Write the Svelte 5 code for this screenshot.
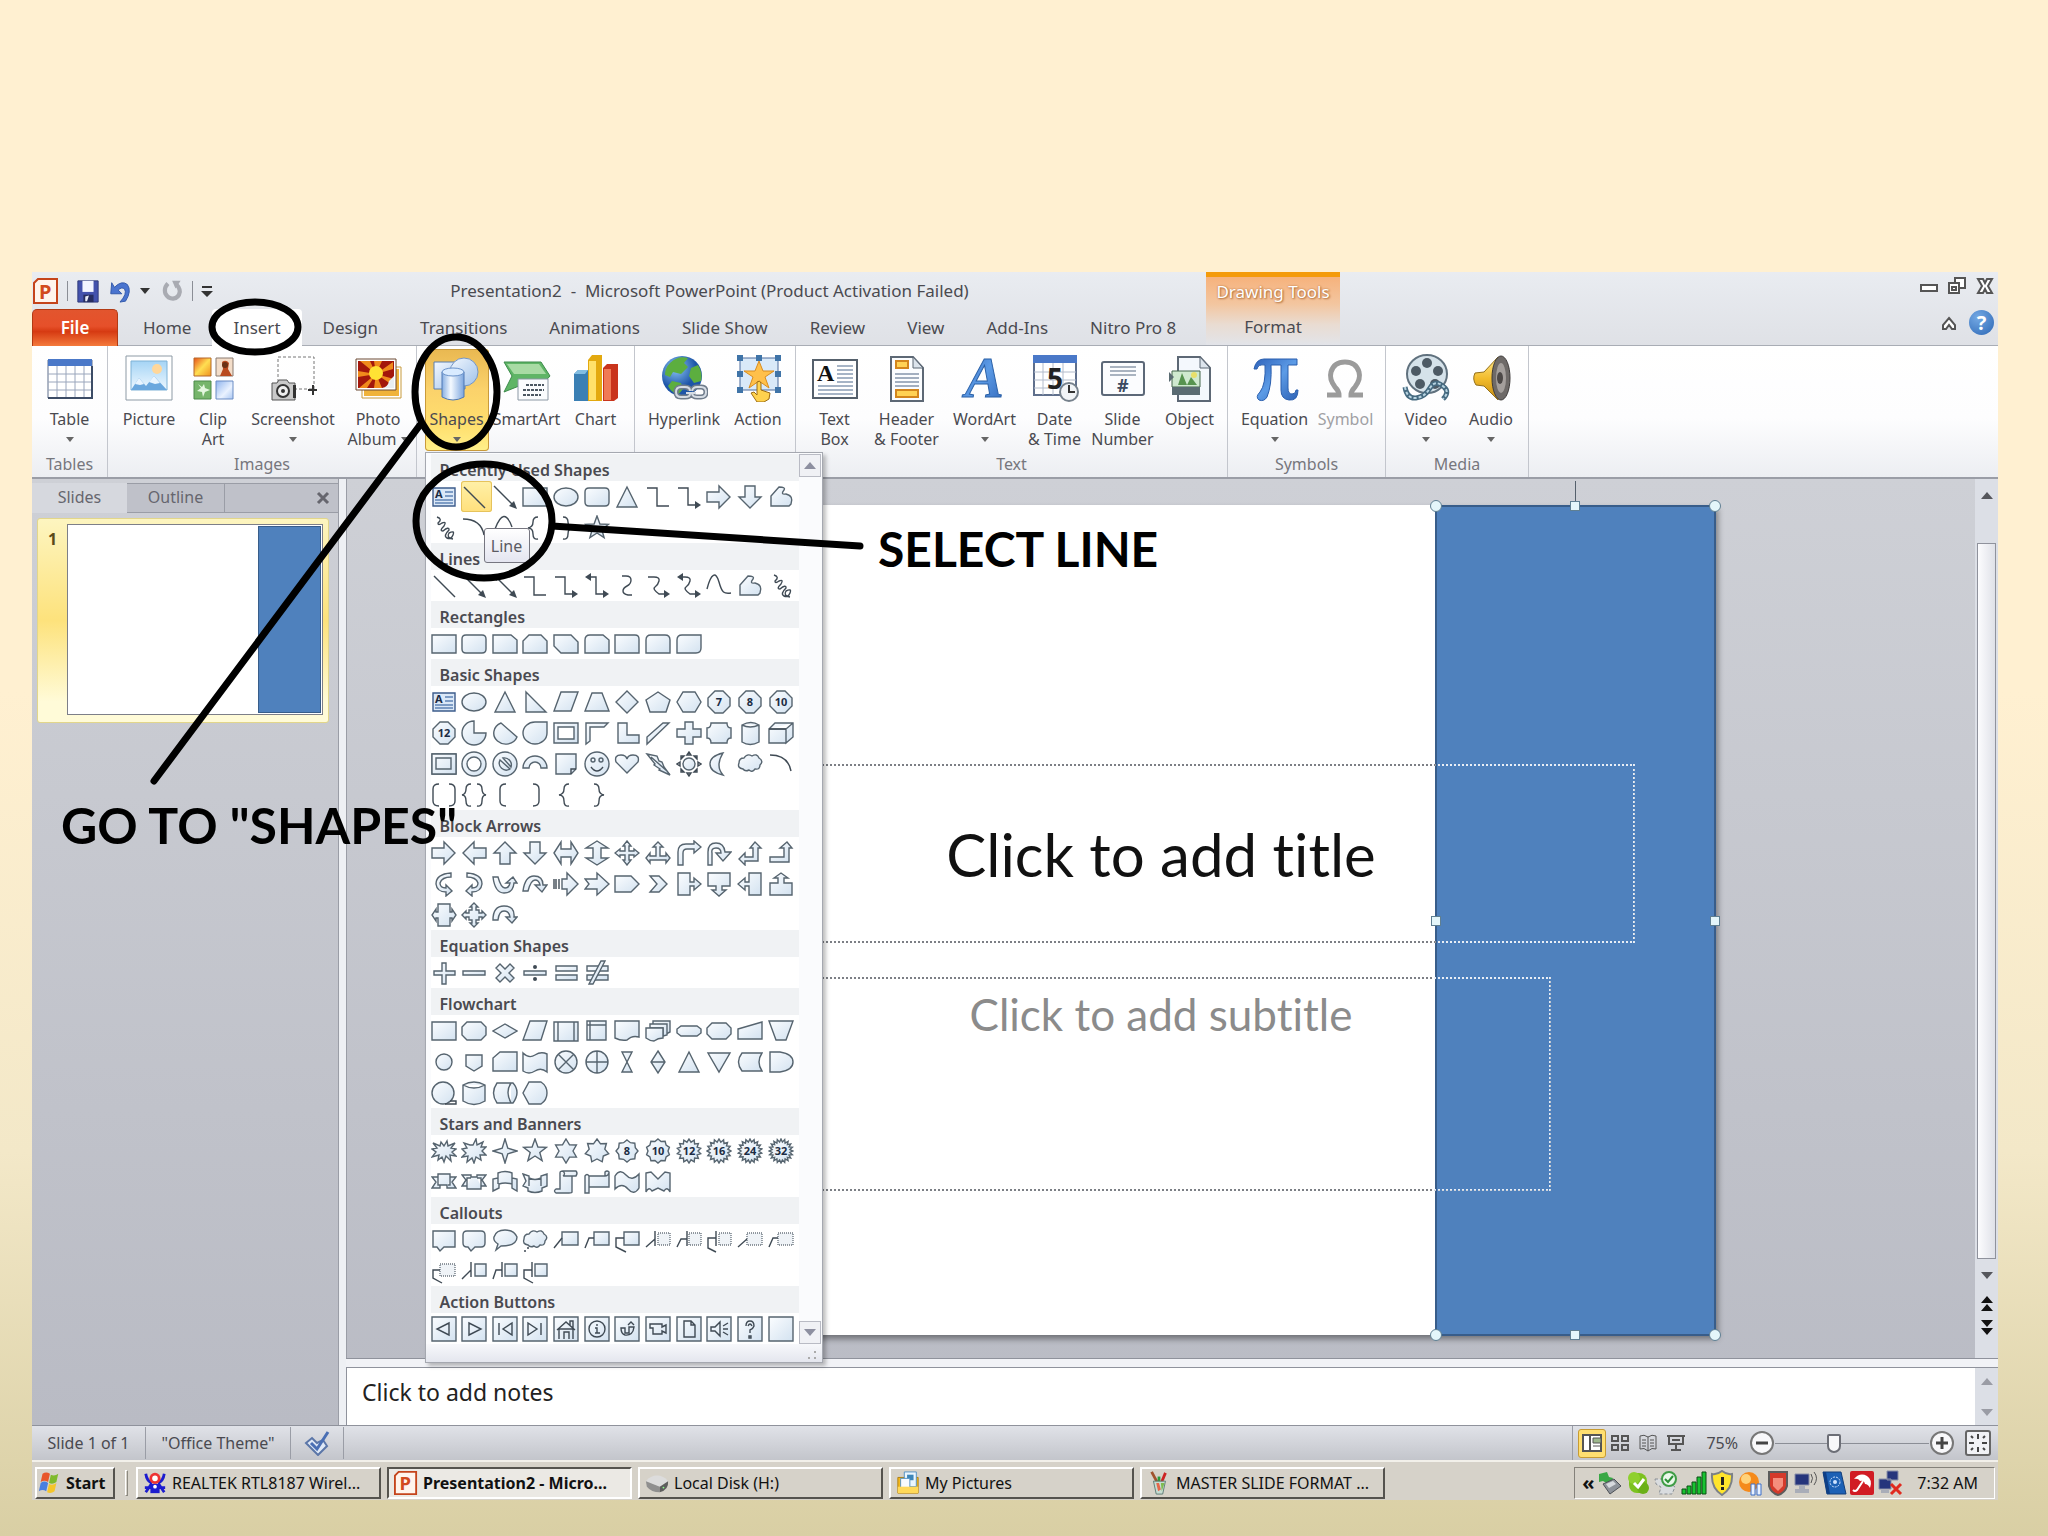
<script lang="ts">
	type Part = { kind: string; value: string };

	// --- shape path helpers, all inside a 26 x 26 box ---
	const ell = (cx: number, cy: number, rx: number, ry = rx) =>
		`M${cx - rx} ${cy}a${rx} ${ry} 0 1 0 ${rx * 2} 0a${rx} ${ry} 0 1 0 ${-rx * 2} 0z`;

	function star(n: number, outer: number, inner: number, turn = 0) {
		const pts: string[] = [];
		for (let i = 0; i < n * 2; i++) {
			const r = i % 2 ? inner : outer;
			const a = (Math.PI * i) / n - Math.PI / 2 + turn;
			pts.push(`${(13 + r * Math.cos(a)).toFixed(1)} ${(13 + r * Math.sin(a)).toFixed(1)}`);
		}
		return `M${pts.join('L')}z`;
	}

	const parse = (icon: string): Part[] =>
		icon.split('|').map((p) => ({ kind: p[0], value: p.slice(2) }));

	// s: filled outline, l: line, k: solid, m: shaded, d: dotted outline, t: number, a: letter A
	const RECT = 's:M1 4h24v18H1z';
	const RRECT = 's:M5 4h16q4 0 4 4v10q0 4-4 4H5q-4 0-4-4V8q0-4 4-4z';
	const OVAL = `s:${ell(13, 13, 12, 9)}`;
	const TEXTBOX = 'b:M2 4h22v18H2z|c:M14 8h8M14 12h8M4 16h18M4 19h18|a:A';
	const TRI = 's:M13 3l10 20H3z';
	const LINE = 'l:M3 3L24 24';
	const ARROW = 'l:M2 2L21 21|k:M25 25l-8-3 5-5z';
	const ARROW2 = 'l:M6 6L21 21|k:M25 25l-8-3 5-5z|k:M2 2l7 2-5 4z';
	const ELBOW = 'l:M2 4h10v18h12';
	const ELBOW_ARROW = 'l:M2 4h10v17h8|k:M19 17l6 4-6 4z';
	const RIGHT = 's:M1 8h12V2l11 11-11 11v-6H1z';
	const DOWN = 's:M8 2v11H2l11 11 11-11h-6V2z';
	const FREE = 's:M3 22V12l8-9q7 0 5 3-4 5 2 4 8 2 5 10l-2 2z';
	const SCRIBBLE = 'l:M6 2q6 2 1 6 0 3 4 0 5-2 2 3-5 5-1 5 6-5 6-1-6 6-2 8t6-3-4-2q-3 5 4 6';
	const ARC = 'l:M2 4Q20 4 23 20';
	const LBRACE = 'l:M16 2q-5 0-5 5t-5 6q5 0 5 6t5 5';
	const RBRACE = 'l:M10 2q5 0 5 5t5 6q-5 0-5 6t-5 5';
	const STAR5 = `s:${star(5, 12, 5)}`;
	const CAN = 's:M2 5v16q11 7 22 0V5Q13-1 2 5zq11 6 22 0';
	const CLOUD = 'M6 18q-6-1-4-6 0-5 5-5 3-5 8-2 5-3 7 2 5 3 1 7 0 5-5 4-3 4-6 1-4 2-6-1z';
	const num = (n: number) => `s:M9 2h8l7 7v8l-7 7H9l-7-7V9z|t:${n}`;
	const box = (inner: string) => `s:M1 1h24v24H1z|${inner}`;

	const sections = [
		{
			name: 'Recently Used Shapes',
			icons: [
				TEXTBOX, LINE, ARROW, RECT, OVAL, RRECT, TRI, ELBOW, ELBOW_ARROW, RIGHT, DOWN, FREE,
				SCRIBBLE, ARC, 'l:M3 14Q12-10 20 12', LBRACE, RBRACE, STAR5
			]
		},
		{
			name: 'Lines',
			icons: [
				LINE, ARROW, ARROW2, ELBOW, ELBOW_ARROW,
				'l:M6 4h6v17h8|k:M19 17l6 4-6 4z|k:M7 0L1 4l6 4z',
				'l:M8 3h4q5 0 5 4t-4 6-4 5 5 4h4',
				'l:M3 4h6q6 0 5 4t-4 6 4 7h6|k:M19 17l6 4-6 4z',
				'l:M6 4h3q6 0 5 4t-4 6 4 7h6|k:M19 17l6 4-6 4z|k:M7 0L1 4l6 4z',
				'l:M1 16C5 0 10-2 13 9s5 12 12 11', FREE, SCRIBBLE
			]
		},
		{
			name: 'Rectangles',
			icons: [
				RECT, RRECT,
				's:M1 4h18l6 5v13H1z',
				's:M7 4h12l6 6v12H1V10z',
				's:M1 4h17l7 7v11H8l-7-7z',
				's:M1 22V9q0-5 5-5h13l6 5v13z',
				's:M1 4h20q4 0 4 4v14H1z',
				's:M1 22V9q0-5 5-5h14q5 0 5 5v13z',
				's:M1 22V9q0-5 5-5h19v13q0 5-5 5z'
			]
		},
		{
			name: 'Basic Shapes',
			icons: [
				TEXTBOX, OVAL, TRI, 's:M4 3l20 20H4z', 's:M8 3h17l-7 19H1z', 's:M8 4h10l7 18H1z',
				's:M13 2l11 11-11 11L2 13z', 's:M13 3l12 8-4 12H5L1 11z', 's:M7 3h12l6 10-6 10H7L1 13z',
				num(7), num(8), num(10),
				num(12),
				's:M13 1v12h12a12 12 0 1 1-12-12z',
				's:M9 3l16 14A12 11 0 1 1 9 3z',
				's:M13 2h12v11a12 11 0 1 1-12-11z',
				's:M1 3h24v20H1zM5 7h16v12H5z',
				's:M2 3h22l-4 4H6v14l-4 3z',
				's:M4 3h9v12h12v8H4z',
				's:M18 3h6L2 24v-7z',
				's:M9 2h8v7h8v8h-8v7H9v-7H1V9h8z',
				's:M5 3h16q0 5 4 5v10q-4 0-4 5H5q0-5-4-5V8q4 0 4-5z',
				's:M5 5v17q8 5 17 0V5q-8-5-17 0zq8 4 17 0',
				's:M1 9h17v14H1zl6-6h18v14l-7 6V9l7-6|l:M1 9h17',
				's:M1 3h24v20H1z|m:M25 3v20H1l4-5h15V7z|s:M1 3h24v20H1zM5 7h15v11H5z',
				`s:${ell(13, 13, 12)}${ell(13, 13, 7)}`,
				`s:${ell(13, 13, 12)}|s:M8 9l10 9a7 7 0 0 1-10-9zM11 7l8 9a7 7 0 0 0-8-9z`,
				's:M1 17a12 12 0 0 1 24 0h-6a6 6 0 0 0-12 0z',
				's:M3 3h20v15l-5 5H3z|l:M18 23v-5h5',
				`s:${ell(13, 13, 12)}|l:M7 16q6 8 12 0|s:${ell(9, 9, 2)}${ell(17, 9, 2)}`,
				's:M13 22L2 11Q0 4 7 4q5 0 6 4 1-4 6-4 7 0 5 7z',
				's:M2 3l10 2 2 5 3 1 2 5 6 8-11-5 1-1-6-4 1-1zM6 6l16 14',
				`s:${ell(13, 13, 6)}|l:M11 4l2-3 2 3zM11 22l2 3 2-3zM4 11l-3 2 3 2zM22 11l3 2-3 2zM5 8V5h3zM18 5h3v3zM5 18v3h3zM18 21h3v-3z`,
				's:M17 2Q4 5 4 13t13 11q-8-9 0-22z',
				`s:${CLOUD}`, ARC,
				'l:M8 2q-6 0-6 5v12q0 5 6 5M18 2q6 0 6 5v12q0 5-6 5',
				'l:M10 2q-5 0-5 5t-4 6q4 0 4 6t5 5M16 2q5 0 5 5t4 6q-4 0-4 6t-5 5',
				'l:M14 2q-6 0-6 5v12q0 5 6 5',
				'l:M11 2q6 0 6 5v12q0 5-6 5',
				LBRACE, RBRACE
			]
		},
		{
			name: 'Block Arrows',
			icons: [
				RIGHT, 's:M25 8H13V2L2 13l11 11v-6h12z', 's:M8 24V13H2L13 2l11 11h-6v11z', DOWN,
				's:M1 13l7-11v7h10V2l7 11-7 11v-7H8v7z',
				's:M13 1L2 8h7v10H2l11 7 11-7h-7V8h7z',
				's:M13 1l4 5h-2v5h5V9l5 4-5 4v-2h-5v5h2l-4 5-4-5h2v-5H6v2l-5-4 5-4v2h5V6H9z',
				's:M13 2l5 5h-3v9h6v-3l4 5-4 5v-3H5v3l-4-5 4-5v3h6V7H8z',
				's:M2 25V12q0-8 8-8h8V1l7 6-7 6V9h-7q-4 0-4 4v12z',
				's:M2 25V12Q2 3 10 3t9 9h6l-8 9-7-8h5q0-5-5-5t-4 5v12z',
				's:M2 19l6-6v4h8V8h-3l5-6 6 6h-3v13H8v4z',
				's:M2 22v-5h14V8h-4l7-6 5 6h-3v14z',
				's:M20 2Q5 3 5 13q1 8 10 8v4l6-5-6-6v3Q9 17 9 12q2-6 11-6z',
				's:M6 2q15 1 15 11-1 8-10 8v4l-6-5 6-6v3q6 0 6-5Q15 6 6 6z',
				's:M1 6q2 16 11 16t10-10h3l-4-6-7 6h4q-1 5-5 5T6 6z',
				's:M1 20Q3 5 12 5t9 9h4l-5 7-7-7h5q-1-5-5-5t-7 11z',
				's:M9 8h5V2l11 11-11 11v-6H9z|l:M1 8v10M3 8v10M6 8v10',
				's:M1 8h12V2l12 11-12 11v-6H1l4-5z',
				's:M1 5h16l8 8-8 8H1z',
				's:M5 5h9l8 8-8 8H5l7-8z',
				's:M2 2h12v9h4V7l7 6-7 6v-4h-4v9H2z',
				's:M2 2h22v13h-8v4h4l-7 6-7-6h4v-4H2z',
				's:M24 2H12v9H8V7l-7 6 7 6v-4h4v9h12z',
				's:M2 24h22V12h-8V7h4l-7-5-7 5h4v5H2z',
				's:M7 2h12v8h2V7l4 6-4 6v-3h-2v8H7v-8H5v3l-4-6 4-6v3h2z',
				's:M13 1l4 4h-2v3h3v3h3V9l4 4-4 4v-2h-3v3h-3v3h2l-4 4-4-4h2v-3H8v-3H5v2l-4-4 4-4v2h3V8h3V5H9z',
				's:M1 18Q1 4 12 4t10 11h3l-5 6-6-6h4q-1-6-6-6t-6 9z'
			]
		},
		{
			name: 'Equation Shapes',
			icons: [
				's:M11 3h4v8h9v4h-9v9h-4v-9H3v-4h8z',
				's:M2 11h22v4H2z',
				's:M8 4l5 5 5-5 4 4-5 5 5 5-4 4-5-5-5 5-4-4 5-5-5-5z',
				`s:M2 11h22v4H2z|k:${ell(13, 7, 2)}${ell(13, 19, 2)}`,
				's:M3 6h21v5H3zM3 15h21v5H3z',
				's:M3 6h21v5H3zM3 15h21v5H3z|s:M17 1h4L9 24H5z'
			]
		},
		{
			name: 'Flowchart',
			icons: [
				RECT, 's:M6 4h14l5 5v8l-5 5H6l-5-5V9z', 's:M13 6l12 7-12 7L1 13z', 's:M8 3h17l-6 19H1z',
				's:M1 4h24v19H1zM5 4v19M21 4v19', 's:M3 3h19v19H3zM6 3v19M3 7h19',
				's:M1 3h24v16q-7-2-12 3-6 1-12-2z',
				's:M8 3h17v11l-4 2V7H8z|s:M5 6h17v11l-4 1v-8H5z|s:M1 10h17v10q-5 0-9 3-4 0-8-3z',
				's:M5 8h16l4 3v4l-4 3H5l-4-3v-4z',
				's:M6 5h14l5 5v6l-5 5H6l-5-5v-6z',
				's:M1 11l24-7v17H1z',
				's:M1 3h24l-7 19H8z',
				`s:${ell(13, 13, 8)}`,
				's:M5 6h16v11l-8 5-8-5z',
				's:M8 3h17v19H1V9z',
				's:M1 4q6 6 12 2t12-1v18q-6-5-12-1t-12 0z',
				`s:${ell(13, 13, 11)}M5 5l16 16M21 5L5 21`,
				`s:${ell(13, 13, 11)}M13 2v22M2 13h22`,
				's:M8 3h10L8 23h10z',
				's:M13 2l7 11-7 11-7-11zM6 13h14',
				TRI, 's:M2 4h22L13 23z',
				's:M5 4h20q-6 9 0 18H5q-7-9 0-18z',
				's:M2 3h10q13 2 13 10T12 23H2z',
				`s:${ell(12, 13, 11)}|l:M14 24h11v-3h-6`,
				CAN,
				's:M5 3h16q8 9 0 20H5q-7-10 0-20zM19 3q-6 9 0 20',
				's:M7 2h12q6 4 6 11t-6 11H7L1 13z'
			]
		},
		{
			name: 'Stars and Banners',
			icons: [
				's:M13 8l3-5 1 5 7-3-4 5 5 1-4 3 4 4-6-1 1 6-5-5-2 6-2-5-4 3 1-5-7 2 4-5-4-3 5-1-4-5 7 3 1-4z',
				's:M12 7l3-6 1 6 6-3-2 5 5 0-4 4 4 4-6 0 1 5-5-3-2 6-2-5-5 4 1-6-6 1 4-4-4-4 5-1-3-5 6 2z',
				`s:${star(4, 12, 4)}`, STAR5,
				`s:${star(6, 12, 7)}`, `s:${star(7, 12, 8)}`,
				`s:${star(8, 11, 9)}|t:8`, `s:${star(10, 12, 10)}|t:10`, `s:${star(14, 12, 9)}|t:12`,
				`s:${star(16, 12, 9)}|t:16`, `s:${star(18, 12, 9)}|t:24`, `s:${star(20, 12, 9)}|t:32`,
				's:M1 8h6V5h12v3h6l-4 5 4 6h-9v-3H9v3H1l4-6zM7 8v8h2M19 8v8h-2',
				's:M1 6h9v2h6V6h9l-4 5 4 6h-5v3H6v-3H1l4-6zM6 17V9h4M20 17V9h-4',
				's:M1 22V10l5-1V4q7-3 14 0v5l5 1v12l-5-3v-4q-7-2-13 0v4zM6 9v6M20 9v6',
				's:M1 5l6 2v2q6 3 12 0V7l6-2v12l-5 2v3q-7 3-14 0v-3l-5-2 3-5zM7 9v8M19 9v8',
				's:M7 4q0-2 3-2h13q2 2 0 5h-4v16q0 1-3 1H3q-3-2 0-4h4zM10 7h9M10 2q3 3 0 5',
				's:M1 7q2-3 4 0h16V3q2-2 4 0v15H5v6H1zM5 7v11M21 7q3 0 4-3',
				's:M1 7q5-8 11-1t13-1v14q-5 8-11 1T1 20z',
				's:M1 4l5-1 7 7 7-7 5 1v19q-3-6-6-1l-6-3-6 3q-3-5-6 1z'
			]
		},
		{
			name: 'Callouts',
			icons: [
				's:M2 4h22v16H13l-4 4-3-4H2z',
				's:M6 4h14q4 0 4 4v8q0 4-4 4h-6l-4 4-3-4H6q-4 0-4-4V8q0-4 4-4z',
				's:M9 19l-5 4 2-6Q1 14 2 10q2-7 11-7t12 7q0 9-16 9z',
				`s:${CLOUD}|l:M5 21h2M2 24h2`,
				's:M9 5h16v13H9z|l:M1 21l8-10',
				's:M10 5h15v13H10z|l:M1 21l4-10h5',
				's:M10 5h15v13H10z|l:M10 11H2v9l10 5',
				'd:M13 6h12v12H13z|l:M10 4v15M1 20l9-8',
				'd:M13 6h12v12H13z|l:M11 4v15M1 20l4-8h6',
				'd:M13 6h12v12H13z|l:M10 4v15M10 11H2v10l8 4',
				'd:M10 6h15v12H10z|l:M1 20l9-8',
				'd:M10 6h15v12H10z|l:M1 20l4-9h5',
				'd:M9 6h15v12H9z|l:M9 12H2v8l9 5',
				's:M14 6h11v12H14z|l:M10 4v15M1 21l9-9',
				's:M13 6h12v12H13z|l:M10 4v15M1 21l3-9h6',
				's:M13 6h12v12H13z|l:M10 4v15M10 12H2v8l9 5'
			]
		},
		{
			name: 'Action Buttons',
			icons: [
				box('l:M18 7v12L6 13z'), box('l:M8 7v12l12-6z'),
				box('l:M7 7v12M20 7v12l-9-6z'), box('l:M19 7v12M6 7v12l9-6z'),
				box('l:M6 23V13h14v10M4 14l9-8 9 8M17 9V5h3v7M11 23v-7h5v7'),
				box(`l:${ell(13, 13, 8)}M11 12h2v5M11 17h5M13 8v2`),
				box('l:M7 12h4v5h4v-6h5q-1 9-9 8-4-1-4-7zM14 9l3-3 3 3'),
				box('l:M5 8h12v3l4-2v8l-4-2v3H8v-6H5z'),
				box('l:M8 5h7l4 4v12H8zM15 5v4h4'),
				box('l:M5 11h4l5-5v14l-5-5H5zM17 10l5-3M17 13h5M17 16l5 3'),
				box('l:M9 10q0-5 4-5t4 5q-1 3-4 4v3M11 10q2-4 4 0M12 20h2v2h-2z'),
				box('l:M0 0')
			]
		}
	];

	const icons: Record<string, string> = {
		table:
			'<path fill="#fff" stroke="#5f6f8c" d="M2 6h44v38H2z"/><path fill="#4a78c8" d="M2 5h44v7H2z"/><path stroke="#9aa6bc" d="M11 12v32M20 12v32M29 12v32M38 12v32M2 20h44M2 28h44M2 36h44"/><path stroke="#3c4c66" stroke-width="2" fill="none" d="M2 44h44V12"/>',
		picture:
			'<path fill="#fff" stroke="#8d9aa5" d="M1 2h46v44H1z"/><path fill="url(#sky)" stroke="#7fb2d6" d="M6 7h36v29H6z"/><circle cx="32" cy="15" r="5" fill="#ffd79a"/><path fill="#6ba8de" d="M6 36l8-12 7 8 8-10 13 14z"/><path fill="#e9f5ff" d="M14 24l5 6-4 1-5-1zM29 22l6 7-5 1-6-2z"/>',
		clipart:
			'<path fill="url(#sun)" stroke="#b5692a" d="M5 4h17v18H5z"/><path fill="#f3ddc9" stroke="#8a7a70" d="M27 4h17v18H27z"/><path fill="#b94a1f" d="M33 8q4-3 7 1l-1 6 4 7H31l3-7z"/><circle cx="36" cy="11" r="3" fill="#6b3216"/><path fill="#76b56b" stroke="#4c8a4a" d="M5 27h17v18H5z"/><path fill="#e4f7df" d="M9 30l3 4-4 3 5 1 1 5 2-5 5-2-5-2-1-4-2 3z"/><path fill="url(#ice)" stroke="#6b8cc4" d="M27 27h17v18H27z"/>',
		screenshot:
			'<path fill="none" stroke="#777" stroke-dasharray="3 2" d="M9 28V3h36v32H26"/><path fill="#c9c9c9" stroke="#555" d="M3 29h5l2-3h8l2 3h6v17H3z"/><circle cx="14" cy="37" r="6" fill="#eee" stroke="#333" stroke-width="2"/><circle cx="14" cy="37" r="2" fill="#333"/><path fill="#333" d="M24 31h3v13h-3z"/><path stroke="#333" stroke-width="2" d="M39 36h10M44 31v10"/>',
		album:
			'<path fill="#fff" stroke="#c79a3c" d="M8 13h39v31H8z"/><path fill="#f0b33a" d="M10 15h35v27H10z"/><path fill="#fff" stroke="#6c4a34" d="M2 5h40v31H2z"/><path fill="#a3170b" d="M4 7h36v27H4z"/><path fill="#f08a1c" d="M22 20L6 7l10 0zM22 20L20 7h8zM22 20l17-12v7zM22 20l18 5v7zM22 20l-2 14h8zM22 20L5 34h8zM22 20L4 23v-6z"/><circle cx="22" cy="19" r="7" fill="#ffe234"/><path fill="#e9eef2" d="M40 22v12H28q6-1 7-7z"/>',
		shapes:
			'<path fill="url(#glass)" stroke="#5b7fae" d="M1 8h31v27H1z"/><circle cx="31" cy="18" r="14" fill="url(#glass)" stroke="#7596c4"/><path fill="url(#pipe)" stroke="#4f79b5" d="M9 18v25q11 6 22 0V18q-11-5-22 0z"/><ellipse cx="20" cy="18" rx="11" ry="4" fill="#d9ebff" stroke="#6a92c9"/>',
		smartart:
			'<path fill="#5fb566" stroke="#3d8b4b" d="M1 8h37l9 14-9 10H16L1 38l8-16z"/><path fill="#a8dba4" d="M4 10h32l7 10H11z"/><path fill="#fafcfe" stroke="#8b98a4" d="M15 25h30v21H15z"/><path stroke="#4c5863" stroke-width="2" stroke-dasharray="3 1" d="M23 31h18M20 36h21M20 41h18"/>',
		chart:
			'<path fill="#3a7fb4" d="M2 20l4-4h10v31H2z"/><path fill="#82bde2" d="M2 20l4-4h10l-3 4z"/><path fill="#e3a90f" d="M16 6l4-5h10v46H16z"/><path fill="#ffe16b" d="M17 7h7v39h-7z"/><path fill="#c9341c" d="M31 14l4-4h11v34l-4 3H31z"/><path fill="#f07a55" d="M32 15h7v31h-7z"/>',
		hyperlink:
			'<circle cx="22" cy="22" r="20" fill="url(#globe)"/><path fill="#5cae3f" d="M10 9q8-8 18-5l-4 5 4 4-7 7-8-2-3 5-5-2q0-7 5-12zM31 14l7-3q5 8 3 16l-7 2-5-7zM12 27l9 2 2 6-5 6q-7-3-10-9z"/><path fill="none" stroke="#6f7c8b" stroke-width="5" d="M30 37q0-4-5-4h-4q-5 0-5 5t5 5h4q5 0 5-3M32 37q1-4 5-4h4q5 0 5 5t-5 5h-4q-4 0-5-3"/><path fill="none" stroke="#d5dce4" stroke-width="2" d="M30 37q0-4-5-4h-4q-5 0-5 5t5 5h4q5 0 5-3M32 37q1-4 5-4h4q5 0 5 5t-5 5h-4q-4 0-5-3M26 39h10"/>',
		action:
			'<path fill="#d9e9f8" stroke="#4b6b9c" stroke-width="1" d="M6 4h38v32H6z"/><path fill="#3f74a8" d="M3 1h6v6H3zM22 1h6v6h-6zM41 1h6v6h-6zM3 17h6v6H3zM41 17h6v6h-6zM3 33h6v6H3zM41 33h6v6h-6z"/><path fill="#ffc04a" stroke="#d98c1e" d="M25 7l4 10h11l-9 6 4 11-10-7-10 7 4-11-9-6h11z"/><path fill="#ffd24e" stroke="#9c6c12" d="M23 28q3-2 4 1v7l9 3-1 6-5 3h-7l-6-9 3-1 3 3z"/>',
		textbox:
			'<path fill="#fff" stroke="#55606c" stroke-width="2" d="M2 6h44v38H2z"/><path stroke="#a6b4c6" stroke-width="2" d="M26 12h16M26 16h16M26 20h16M26 24h16M26 28h16M7 32h35M7 36h35M7 40h35"/><text x="6" y="27" font-family="Liberation Serif" font-weight="bold" font-size="24" fill="#111">A</text>',
		header:
			'<path fill="#fbfdff" stroke="#5d6875" stroke-width="2" d="M8 3h22l10 11v33H8z"/><path fill="#dce4ec" stroke="#5d6875" d="M30 3v11h10z"/><path stroke="#a2afc0" stroke-width="2" d="M12 20h24M12 24h24M12 28h24M12 32h24"/><path fill="#ffd254" stroke="#d3861d" stroke-width="2" d="M13 7h12v7H13zM13 36h22v7H13z"/>',
		wordart:
			'<text x="4" y="43" font-family="Liberation Serif" font-style="italic" font-weight="bold" font-size="58" fill="url(#blue)" stroke="#2c62a8">A</text>',
		date:
			'<path fill="#fff" stroke="#5f6f8c" stroke-width="2" d="M3 3h42v38H3z"/><path fill="#4a78c8" d="M2 1h44v8H2z"/><path stroke="#b3bccb" d="M12 9v32M22 9v32M32 9v32M3 18h42M3 26h42M3 34h42"/><text x="16" y="35" font-family="Noto Sans" font-weight="bold" font-size="28" fill="#222">5</text><circle cx="38" cy="38" r="9" fill="#f1f4f7" stroke="#76818c" stroke-width="2"/><path stroke="#333" stroke-width="2" fill="none" d="M38 31v7h6"/>',
		number:
			'<rect x="3" y="8" width="42" height="33" rx="2" fill="#fbfcfe" stroke="#5c6878" stroke-width="2"/><path stroke="#a9b3c0" stroke-width="2" d="M11 13h26M11 17h26M11 21h26"/><text x="18" y="38" font-family="Noto Sans" font-weight="bold" font-size="18" fill="#3b4a61">#</text>',
		object:
			'<path fill="#f4f8fd" stroke="#5d6875" stroke-width="2" d="M12 3h22l10 11v33H12z"/><path fill="#dce4ec" stroke="#5d6875" d="M34 3v11h10z"/><path fill="#cfe9cf" stroke="#44664d" d="M6 17h28v16H6z"/><path fill="#57934f" d="M12 31l4-12 5 12zM21 31l4-8 6 8z"/><circle cx="28" cy="21" r="3" fill="#e8e06a"/><path fill="#5a6b72" d="M6 33h28v8H6zM3 18l5 5-5 5z"/>',
		equation:
			'<path fill="url(#blue)" stroke="#2b5fae" d="M3 15q2-10 10-10h33v6h-9v23q0 6 4 6 4 0 4-4h2q0 11-9 10-8-1-8-10V11H20q1 20-4 32-3 5-8 3-4-3 1-8 6-8 5-27-7-1-8 4z"/>',
		symbol:
			'<path fill="none" stroke="#9b9b9b" stroke-width="5" d="M5 41h12q0-4-4-8-6-8-4-15 3-10 14-10t14 10q2 7-4 15-4 4-4 8h12"/>',
		video:
			'<ellipse cx="25" cy="20" rx="20" ry="19" fill="#d5e2ea" stroke="#60717e" stroke-width="2"/><circle cx="25" cy="9" r="5" fill="#4d5a65"/><circle cx="14" cy="17" r="5" fill="#4d5a65"/><circle cx="36" cy="17" r="5" fill="#4d5a65"/><circle cx="18" cy="30" r="5" fill="#4d5a65"/><circle cx="33" cy="30" r="5" fill="#4d5a65"/><path fill="none" stroke="#466a80" stroke-width="5" d="M3 33q2 12 11 11t14-10 14-1q6 5-1 12"/><path fill="none" stroke="#b9d5e2" stroke-width="2" stroke-dasharray="3 2" d="M3 33q2 12 11 11t14-10 14-1q6 5-1 12"/>',
		audio:
			'<path fill="url(#gold)" stroke="#94701a" d="M8 19q-3 6 1 12l8 1 14 14V3L17 18z"/><ellipse cx="34" cy="24" rx="9" ry="22" fill="#6e6a68" stroke="#3d3a39"/><ellipse cx="34" cy="24" rx="5" ry="15" fill="#a49f9c"/><ellipse cx="33" cy="24" rx="3" ry="6" fill="#4c4847"/>'
	};

	const groups = [
		{ name: 'Tables', width: 76, items: [['table', 'Table', '', 66, 1]] },
		{
			name: 'Images',
			width: 309,
			items: [
				['picture', 'Picture', '', 72, 0],
				['clipart', 'Clip', 'Art', 56, 0],
				['screenshot', 'Screenshot', '', 104, 1],
				['album', 'Photo', 'Album', 66, 2]
			]
		},
		{
			name: '',
			width: 218,
			items: [
				['shapes', 'Shapes', '', 64, 1],
				['smartart', 'SmartArt', '', 76, 0],
				['chart', 'Chart', '', 62, 0]
			]
		},
		{
			name: '',
			width: 161,
			items: [
				['hyperlink', 'Hyperlink', '', 86, 0],
				['action', 'Action', '', 62, 0]
			]
		},
		{
			name: 'Text',
			width: 432,
			items: [
				['textbox', 'Text', 'Box', 64, 0],
				['header', 'Header', '& Footer', 80, 0],
				['wordart', 'WordArt', '', 76, 1],
				['date', 'Date', '& Time', 64, 0],
				['number', 'Slide', 'Number', 72, 0],
				['object', 'Object', '', 62, 0]
			]
		},
		{
			name: 'Symbols',
			width: 158,
			items: [
				['equation', 'Equation', '', 78, 1],
				['symbol', 'Symbol', '', 64, 0]
			]
		},
		{
			name: 'Media',
			width: 143,
			items: [
				['video', 'Video', '', 68, 1],
				['audio', 'Audio', '', 62, 1]
			]
		}
	] as { name: string; width: number; items: [string, string, string, number, number][] }[];

	const tabs = [
		'Home', 'Insert', 'Design', 'Transitions', 'Animations', 'Slide Show',
		'Review', 'View', 'Add-Ins', 'Nitro Pro 8'
	];

	const PPT =
		'<path fill="#fff4ec" stroke="#c5441b" stroke-width="2" d="M5 1h19v24H1V5z"/><text x="6" y="21" font-family="Noto Sans" font-weight="bold" font-size="20" fill="#d24a1d">P</text>';

	const tasks = [
		{
			label: 'REALTEK RTL8187 Wirel...',
			icon: '<path fill="none" stroke="#1c1ccf" stroke-width="3" d="M3 3q1 8 7 10M23 3q-1 8-7 10M9 14l-6 9M17 14l6 9M2 18h22"/><circle cx="13" cy="8" r="6" fill="#e33"/><circle cx="13" cy="8" r="3" fill="#fff"/><path fill="#1c1ccf" d="M8 14h10v10H8z"/><circle cx="13" cy="17" r="2" fill="#fff"/>'
		},
		{ label: 'Presentation2 - Micro...', icon: PPT, active: true },
		{
			label: 'Local Disk (H:)',
			icon: '<path fill="#dcdcdc" d="M1 11q5-6 12-6t12 6l-9 7z"/><path fill="#8f8f8f" d="M1 11l15 6v6q-9 0-14-6z"/><path fill="#5d5d5d" d="M16 17l9-6q1 9-9 12z"/><circle cx="20" cy="18" r="1" fill="#8f8"/>'
		},
		{
			label: 'My Pictures',
			icon: '<path fill="#f4b91f" stroke="#b17d09" d="M2 7h22v17H2z"/><path fill="#eaf6ff" stroke="#4f8fc2" d="M9 1h13v16H9z"/><path fill="#3d86b9" d="M12 4h7v6h-7z"/><path fill="#f8fbfe" stroke="#4f8fc2" d="M5 8h10v10H5z"/><path fill="#ffd95a" d="M2 17h22v7H2z"/>'
		},
		{
			label: 'MASTER SLIDE FORMAT ...',
			icon: '<path stroke="#a0522d" stroke-width="3" d="M5 1l6 11"/><path stroke="#c22" stroke-width="3" d="M20 2l-5 12"/><path stroke="#2a9b3a" stroke-width="3" d="M13 6v10"/><path fill="#c6dcd2" stroke="#5b7a74" d="M7 11h13l-3 14h-7z"/><path fill="#e5664b" d="M10 13h3l2 7-3 2z"/><path fill="#7dbb4f" d="M15 13h4l-3 9z"/>'
		}
	];

	const tray = [
		'<path fill="#39a845" d="M2 4l8-2 2 5 4 1-3 7-7-4-4 1z"/><path fill="#8d9299" stroke="#4d5157" d="M6 14l11-5 7 7-11 8z"/><path fill="#d7dade" d="M9 14l7-3 3 3-7 4z"/>',
		'<rect x="4" y="3" width="18" height="20" rx="8" fill="#7cc21f"/><circle cx="9" cy="8" r="6" fill="#8fd02f"/><circle cx="18" cy="18" r="6" fill="#6bb018"/><path fill="none" stroke="#fff" stroke-width="3" d="M9 13l4 4 6-8"/>',
		'<path fill="#d9dcdf" stroke="#8b9096" stroke-dasharray="3 2" d="M2 9h10l10 8-3 7H6l2-7-5-3z"/><circle cx="16" cy="9" r="7" fill="#eaf8ea" stroke="#3f9d46" stroke-width="2"/><path fill="none" stroke="#2c9136" stroke-width="2" d="M12 9l3 3 5-6"/>',
		'<path fill="#19c332" stroke="#0a4f13" d="M1 19h4v5H1zM6 16h4v8H6zM11 12h4v12h-4zM16 7h4v17h-4zM21 2h4v22h-4z"/>',
		'<path fill="#ffe52c" stroke="#7b8086" stroke-width="2" d="M13 1q5 4 10 3 1 14-10 21Q2 18 3 4q5 1 10-3z"/><path fill="#222" d="M12 7h3v8h-3zM12 17h3v3h-3z"/>',
		'<circle cx="12" cy="12" r="10" fill="#f58a1b"/><circle cx="9" cy="9" r="5" fill="#ffd27a"/><path fill="#e8f1ff" stroke="#3d6fc9" d="M14 14h4v11h-4zM20 14h4v11h-4z"/>',
		'<path fill="#d43a2b" stroke="#5c5c5c" stroke-width="2" d="M4 2h18v14q-2 7-9 9-7-2-9-9z"/><path fill="#f58e7d" d="M8 8h10v8l-5 5-5-5z"/>',
		'<path fill="#26357c" stroke="#8a90a8" d="M2 4h14v11H2z"/><path fill="#a9adb8" d="M6 16h6v3h4v4H2v-4h4z"/><path fill="none" stroke="#555" d="M18 4q3 4 0 9M21 2q5 6 0 13"/>',
		'<path fill="#1d61b5" stroke="#123e7a" d="M2 2h18l5 22H6z"/><path fill="#0f3f86" d="M2 2h3l4 22H6z"/><circle cx="14" cy="12" r="5" fill="none" stroke="#cfe3ff" stroke-dasharray="2 1"/><circle cx="14" cy="12" r="2" fill="#cfe3ff"/>',
		'<rect x="1" y="1" width="24" height="24" rx="2" fill="#d11c24"/><path fill="#fff" d="M5 9q6-7 13-3 6 4 3 12-2-4-5-4-1-4-5-3-2-3-6-2z"/><path fill="none" stroke="#fff" stroke-width="2" d="M14 11l-6 9q-2 2-4 0"/>',
		'<path fill="#26357c" stroke="#8a90a8" d="M10 1h11v9H10zM2 9h12v10H2z"/><path fill="#a9adb8" d="M4 20h8v3H4z"/><path stroke="#e02a1f" stroke-width="3" d="M14 14l10 10M24 14L14 24"/>'
	];

	let zoom = $state(37);
</script>

<svg class="defs" width="0" height="0" aria-hidden="true">
	<defs>
		<linearGradient id="pale" x1="0" y1="0" x2="1" y2="1">
			<stop offset="0" stop-color="#fbfdff" /><stop offset="1" stop-color="#d3e2f0" />
		</linearGradient>
		<linearGradient id="sky" x1="0" y1="0" x2="0" y2="1">
			<stop offset="0" stop-color="#a5d4f5" /><stop offset="1" stop-color="#eef8ff" />
		</linearGradient>
		<linearGradient id="sun" x1="0" y1="0" x2="1" y2="1">
			<stop offset="0" stop-color="#e8501a" /><stop offset=".5" stop-color="#ffdf52" /><stop offset="1" stop-color="#ef9020" />
		</linearGradient>
		<linearGradient id="ice" x1="0" y1="0" x2="1" y2="1">
			<stop offset="0" stop-color="#8fb4ee" /><stop offset=".6" stop-color="#eaf2ff" /><stop offset="1" stop-color="#a9c6f2" />
		</linearGradient>
		<linearGradient id="glass" x1="0" y1="0" x2="1" y2="1">
			<stop offset="0" stop-color="#f3f8fe" /><stop offset="1" stop-color="#9fc1ea" />
		</linearGradient>
		<linearGradient id="pipe" x1="0" y1="0" x2="1" y2="0">
			<stop offset="0" stop-color="#86aee2" /><stop offset=".4" stop-color="#f5faff" /><stop offset="1" stop-color="#7ba5de" />
		</linearGradient>
		<linearGradient id="blue" x1="0" y1="0" x2="1" y2="1">
			<stop offset="0" stop-color="#2f63bb" /><stop offset=".5" stop-color="#5c9be6" /><stop offset="1" stop-color="#2d62b6" />
		</linearGradient>
		<linearGradient id="gold" x1="0" y1="0" x2="0" y2="1">
			<stop offset="0" stop-color="#ffe98f" /><stop offset=".5" stop-color="#f2bc2c" /><stop offset="1" stop-color="#c58a12" />
		</linearGradient>
		<radialGradient id="globe" cx=".35" cy=".3">
			<stop offset="0" stop-color="#8cc6f5" /><stop offset="1" stop-color="#1d55a8" />
		</radialGradient>
	</defs>
</svg>

{#snippet glyph(svg: string, size: number, box: number)}
	<svg width={size} height={size} viewBox="0 0 {box} {box}" fill="none" aria-hidden="true">{@html svg}</svg>
{/snippet}

{#snippet shape(icon: string)}
	<svg width="26" height="26" viewBox="0 0 26 26" aria-hidden="true">
		{#each parse(icon) as part}
			{#if part.kind === 't'}
				<text class="num" x="13" y="17" text-anchor="middle">{part.value}</text>
			{:else if part.kind === 'a'}
				<text class="letter" x="4" y="14">{part.value}</text>
			{:else}
				<path class={part.kind} fill-rule="evenodd" d={part.value} />
			{/if}
		{/each}
	</svg>
{/snippet}

<main>
	<div class="window">
		<header>
			<div class="head-left">
				<div class="titlebar">
					<div class="quick">
						<button aria-label="PowerPoint">{@render glyph(PPT, 26, 26)}</button>
						<i class="sep"></i>
						<button aria-label="Save">{@render glyph('<path fill="#4352ad" stroke="#2d3776" d="M2 2h22v23H2z"/><path fill="#f2f5ff" d="M7 2h12v12H7z"/><path fill="#262d60" d="M8 17h11v8H8z"/><path fill="#e8ebf7" d="M10 19l4-1-2 6h-2z"/>', 24, 26)}</button>
						<button aria-label="Undo">{@render glyph('<path fill="#4a74cf" stroke="#2f56a8" d="M4 4l3 5q8-8 14-3 5 7-2 18l-6 1q8-9 5-14-3-3-7 1l4 4H3z"/>', 24, 26)}</button>
						<svg class="mini" width="10" height="6" aria-hidden="true"><path d="M0 0h10L5 6z" fill="#333" /></svg>
						<button aria-label="Repeat">{@render glyph('<path fill="none" stroke="#a9abb2" stroke-width="5" d="M7 4q-5 5-3 12 3 6 9 6 7-1 8-8 0-6-5-9"/><path fill="#a9abb2" d="M12 1h10l-6 9z"/>', 22, 26)}</button>
						<i class="sep"></i>
						<svg width="12" height="12" aria-hidden="true"><path d="M1 1h10v2H1zM0 6h12l-6 6z" fill="#333" /></svg>
					</div>
					<h1>Presentation2 &nbsp;- &nbsp;Microsoft PowerPoint (Product Activation Failed)</h1>
				</div>
				<nav class="tabs">
					<button class="file">File</button>
					{#each tabs as tab}
						<button class:selected={tab === 'Insert'}>{tab}</button>
					{/each}
				</nav>
			</div>
			<div class="context">
				<span>Drawing Tools</span>
				<button>Format</button>
			</div>
			<div class="head-right">
				<div class="controls">
					<button aria-label="Minimize">{@render glyph('<path fill="#fff" stroke="#555" stroke-width="2" d="M1 8h16v6H1z"/>', 18, 18)}</button>
					<button aria-label="Restore">{@render glyph('<path fill="#fff" stroke="#555" stroke-width="2" d="M7 1h10v10H7z"/><path fill="#fff" stroke="#555" stroke-width="2" d="M1 6h10v10H1zM4 10h4v3H4z"/>', 18, 18)}</button>
					<button aria-label="Close">{@render glyph('<path fill="#fff" stroke="#555" stroke-width="2" d="M2 2h5l2 4 2-4h5l-4 7 4 7h-5l-2-4-2 4H2l4-7z"/>', 18, 18)}</button>
				</div>
				<div class="controls help">
					<button aria-label="Minimize the Ribbon">{@render glyph('<path fill="#fff" stroke="#555" stroke-width="2" d="M8 3l6 7v4h-3l-3-4-3 4H2v-4z"/>', 16, 16)}</button>
					<button class="ask" aria-label="Help">?</button>
				</div>
			</div>
		</header>

		<div class="ribbon">
			{#each groups as group}
				<section style="width: {group.width}px">
					<div class="items">
						{#each group.items as [icon, label, second, width, drop]}
							<div class="item" style="width: {width}px">
								<button class:pressed={icon === 'shapes'} class:off={icon === 'symbol'}>
									{@render glyph(icons[icon], 48, 48)}
									<span>{label}</span>
									{#if second}<span>{second}{#if drop}<svg class="drop" width="8" height="5" aria-hidden="true"><path d="M0 0h8L4 5z" /></svg>{/if}</span>
									{:else if drop}<svg class="drop" width="8" height="5" aria-hidden="true"><path d="M0 0h8L4 5z" /></svg>{/if}
								</button>
								{#if icon === 'shapes'}
									<div class="menu">
										<div class="menu-body">
											<div class="menu-list">
												{#each sections as part}
													<h2>{part.name}</h2>
													<div class="grid">
														{#each part.icons as path, i}
															<button
																class:hover={part.name === 'Recently Used Shapes' && i === 1}
																aria-label="{part.name} {i + 1}">{@render shape(path)}</button>
														{/each}
													</div>
												{/each}
											</div>
											<div class="menu-scroll">
												<button aria-label="Scroll up"><svg width="12" height="7"><path d="M6 0l6 7H0z" /></svg></button>
												<button aria-label="Scroll down"><svg width="12" height="7"><path d="M0 0h12L6 7z" /></svg></button>
											</div>
										</div>
										<div class="menu-foot">
											<svg width="12" height="12" aria-hidden="true"><path d="M8 1h2v2H8zM8 7h2v2H8zM2 7h2v2H2z" fill="#aaa" /></svg>
										</div>
										<div class="tip">Line</div>
									</div>
								{/if}
							</div>
						{/each}
					</div>
					<p>{group.name}</p>
				</section>
			{/each}
		</div>

		<div class="work">
			<aside>
				<div class="pane-tabs">
					<button class="on">Slides</button>
					<button>Outline</button>
					<button class="close" aria-label="Close pane">{@render glyph('<path stroke="#66666e" stroke-width="3" d="M2 2l10 10M12 2L2 12"/>', 14, 14)}</button>
				</div>
				<div class="thumb">
					<b>1</b>
					<div class="thumb-slide"><i></i></div>
				</div>
			</aside>
			<div class="editor">
				<div class="stage">
					<div class="canvas">
						<div class="slide">
							<div class="bluebox">
								<i class="stem"></i>
								<i class="dot nw"></i><i class="dot ne"></i><i class="dot sw"></i><i class="dot se"></i>
								<i class="knob top"></i><i class="knob bottom"></i><i class="knob left"></i><i class="knob right"></i>
							</div>
							<div class="holder title">Click to add title</div>
							<div class="holder subtitle">Click to add subtitle</div>
						</div>
					</div>
					<div class="scroll">
						<button aria-label="Up"><svg width="12" height="7"><path d="M6 0l6 7H0z" /></svg></button>
						<div class="track"><i></i></div>
						<button aria-label="Down"><svg width="12" height="7"><path d="M0 0h12L6 7z" /></svg></button>
						<button class="jump" aria-label="Previous slide"><svg width="12" height="15"><path d="M6 0l6 7H0zM6 8l6 7H0z" /></svg></button>
						<button class="jump" aria-label="Next slide"><svg width="12" height="15"><path d="M0 0h12L6 7zM0 8h12l-6 7z" /></svg></button>
					</div>
				</div>
				<div class="notes">
					<p>Click to add notes</p>
					<div class="scroll dim">
						<button aria-label="Notes up"><svg width="12" height="7"><path d="M6 0l6 7H0z" /></svg></button>
						<button aria-label="Notes down"><svg width="12" height="7"><path d="M0 0h12L6 7z" /></svg></button>
					</div>
				</div>
			</div>
		</div>

		<footer class="status">
			<span class="cell count">Slide 1 of 1</span>
			<span class="cell theme">"Office Theme"</span>
			<span class="cell spell">
				{@render glyph('<path fill="#dfe8f6" stroke="#5b76a8" stroke-width="2" d="M2 13l6-5 5 5 6-3 4 6-9 9z"/><path fill="none" stroke="#4a6fb4" stroke-width="3" d="M7 13l6 6L24 2"/>', 26, 26)}
			</span>
			<div class="views">
				<button class="current" aria-label="Normal">{@render glyph('<path fill="#fff" stroke="#555" stroke-width="2" d="M1 2h18v16H1zM8 2v16"/><path fill="#9db88c" stroke="#555" d="M11 5h8v5h-8zM11 13h8"/>', 20, 20)}</button>
				<button aria-label="Slide Sorter">{@render glyph('<path stroke="#555" stroke-width="2" d="M2 3h6v5H2zM12 3h6v5h-6zM2 12h6v5H2zM12 12h6v5h-6z"/>', 20, 20)}</button>
				<button aria-label="Reading View">{@render glyph('<path stroke="#555" stroke-width="1" d="M10 4Q6 1 2 3v13q4-2 8 2 4-4 8-2V3q-4-2-8 1v14M4 7h4M4 10h4M4 13h4M12 7h4M12 10h4M12 13h4"/>', 20, 20)}</button>
				<button aria-label="Slide Show">{@render glyph('<path stroke="#555" stroke-width="2" d="M1 3h18M3 3v8h14V3M6 7h8M10 11v6M5 17h10"/>', 20, 20)}</button>
				<label for="zoom">75%</label>
				<button class="round" aria-label="Zoom out">{@render glyph('<circle cx="13" cy="13" r="11" fill="#f8f8fa" stroke="#777" stroke-width="2"/><path stroke="#444" stroke-width="3" d="M7 13h12"/>', 26, 26)}</button>
				<input id="zoom" type="range" min="0" max="100" bind:value={zoom} />
				<button class="round" aria-label="Zoom in">{@render glyph('<circle cx="13" cy="13" r="11" fill="#f8f8fa" stroke="#777" stroke-width="2"/><path stroke="#444" stroke-width="3" d="M7 13h12M13 7v12"/>', 26, 26)}</button>
				<button class="fit" aria-label="Fit slide">{@render glyph('<rect x="1" y="1" width="24" height="24" rx="2" fill="#f1f2f5" stroke="#666" stroke-width="2"/><path stroke="#444" stroke-width="2" d="M13 4v5M13 17v5M4 13h5M17 13h5M6 6l2 2M20 6l-2 2M6 20l2-2M20 20l-2-2"/>', 26, 26)}</button>
			</div>
		</footer>

		<div class="taskbar">
			<button class="start">
				{@render glyph('<path fill="#e8562a" d="M6 3q4-3 8 0l-2 9q-4-3-8 0z"/><path fill="#7fba2b" d="M15 4q4 2 8-1l-2 9q-4 3-8 1z"/><path fill="#4a7fe0" d="M4 13q4-3 8 0l-2 9q-4-3-8 0z"/><path fill="#f5c52a" d="M13 14q4 2 8-1l-2 9q-4 3-8 1z"/>', 24, 26)}
				Start
			</button>
			<i class="grip"></i>
			{#each tasks as task}
				<button class="task" class:active={task.active}>
					{@render glyph(task.icon, 24, 26)}
					<span>{task.label}</span>
				</button>
			{/each}
			<div class="tray">
				<button class="more" aria-label="Show hidden icons">«</button>
				{#each tray as icon}
					{@render glyph(icon, 26, 26)}
				{/each}
				<time>7:32 AM</time>
			</div>
		</div>

		<svg class="marks" aria-hidden="true">
			<g fill="none" stroke="#000" stroke-width="7" stroke-linecap="round">
				<ellipse cx="223" cy="55" rx="43" ry="25" />
				<ellipse cx="424" cy="120" rx="41" ry="55" />
				<ellipse cx="452" cy="249" rx="68" ry="57" />
				<path d="M388 153L122 509M520 254L828 274" />
			</g>
			<text class="wide" x="29" y="572">GO TO "SHAPES"</text>
			<text x="846" y="295">SELECT LINE</text>
		</svg>
	</div>
</main>

<style>
	:global(body) {
		margin: 0;
	}

	main {
		box-sizing: border-box;
		min-height: 100vh;
		padding: 272px 50px 36px 32px;
		background: linear-gradient(#fff0d1 0%, #fff0d1 45%, #f3e8c8 75%, #d9cfa4 100%);
		font-family: 'Noto Sans', 'Open Sans', sans-serif;
		font-size: 16px;
		line-height: 20px;
		color: #4a4a50;
	}

	.defs {
		position: absolute;
	}

	button {
		margin: 0;
		padding: 0;
		border: 0;
		background: none;
		color: inherit;
		font: inherit;
	}

	svg {
		display: block;
		flex: none;
	}

	h1,
	h2,
	p {
		margin: 0;
		font: inherit;
	}

	.window {
		position: relative;
		display: flex;
		flex-direction: column;
	}

	/* header */
	header {
		display: flex;
		height: 74px;
		background: linear-gradient(#e9ecf1, #dfe1e6);
		border-bottom: 1px solid #a9adb5;
		box-sizing: border-box;
		font-size: 17px;
		line-height: 24px;
	}

	.head-left {
		width: 1174px;
	}

	.titlebar {
		display: flex;
		align-items: center;
		height: 37px;
	}

	.quick {
		display: flex;
		align-items: center;
		gap: 8px;
		width: 180px;
		padding-left: 1px;
	}

	.quick .sep {
		width: 1px;
		height: 20px;
		background: #8b8e96;
	}

	.quick .mini {
		margin-right: 4px;
	}

	h1 {
		margin: 0 auto;
		white-space: nowrap;
	}

	.tabs {
		display: flex;
		height: 37px;
	}

	.tabs button {
		padding: 0 21px;
		white-space: nowrap;
	}

	.tabs .file {
		width: 86px;
		margin-right: 4px;
		padding: 0;
		border: 1px solid #b23a14;
		border-bottom: 0;
		border-radius: 5px 5px 0 0;
		background: linear-gradient(#e2552e, #e6502a 45%, #d63a12 60%, #f47a3c);
		color: #fff;
		font-weight: 600;
	}

	.tabs .selected {
		background: #fff;
		border-radius: 4px 4px 0 0;
	}

	.context {
		display: flex;
		flex-direction: column;
		align-items: center;
		box-sizing: border-box;
		width: 134px;
		border-top: 5px solid #f49b0b;
		background: linear-gradient(#f6b27c, #f3c6a0 40%, #e9dcd2 70%, #e2e4e9);
	}

	.context span {
		height: 32px;
		line-height: 30px;
		color: #fff;
		text-shadow: 0 0 2px #b5713c, 1px 1px 2px #b5713c;
		white-space: nowrap;
	}

	.context button {
		flex: 1;
	}

	.head-right {
		flex: 1;
	}

	.controls {
		display: flex;
		justify-content: flex-end;
		align-items: center;
		gap: 10px;
		height: 28px;
		padding-right: 4px;
	}

	.help {
		height: 45px;
		gap: 12px;
	}

	.ask {
		width: 25px;
		height: 25px;
		border-radius: 50%;
		background: radial-gradient(circle at 35% 30%, #74a9e4, #2c67b5);
		color: #fff;
		font-size: 20px;
		font-weight: 700;
	}

	/* ribbon */
	.ribbon {
		display: flex;
		height: 131px;
		background: linear-gradient(#fff, #fdfdfe 55%, #eceef2);
		border-bottom: 2px solid #9a9da6;
	}

	section {
		display: flex;
		flex-direction: column;
		flex: none;
		box-sizing: border-box;
		border-right: 1px solid #c3c6cd;
	}

	.items {
		display: flex;
		justify-content: center;
		padding-top: 3px;
		height: 105px;
		box-sizing: border-box;
	}

	.item {
		position: relative;
		flex: none;
	}

	.item > button {
		display: flex;
		flex-direction: column;
		align-items: center;
		box-sizing: border-box;
		width: 100%;
		height: 102px;
		padding-top: 5px;
		white-space: nowrap;
	}

	.item > button > span {
		display: flex;
		align-items: center;
		gap: 4px;
		height: 20px;
	}

	.item > button > :global(svg:first-child) {
		margin-bottom: 7px;
	}

	.item > button > .drop {
		margin-top: 8px;
	}

	.drop path {
		fill: #666;
	}

	.pressed {
		border-radius: 4px;
		background: linear-gradient(#e9b851, #fbd26b 40%, #ffdf6e 75%, #fff08a);
		box-shadow: inset 0 0 0 1px #c99a3b;
	}

	.off {
		color: #a0a0a4;
	}

	section p {
		height: 26px;
		line-height: 26px;
		text-align: center;
		color: #77777d;
	}

	/* shapes menu */
	.menu {
		position: absolute;
		z-index: 5;
		top: 103px;
		left: 0;
		box-sizing: border-box;
		width: 398px;
		border: 1px solid #a5a8b0;
		background: #fafbfd;
		box-shadow: 3px 3px 4px rgba(0, 0, 0, 0.25);
	}

	.menu-body {
		display: flex;
		padding: 1px 0 0 5px;
	}

	.menu-list {
		width: 368px;
	}

	h2 {
		height: 27px;
		padding-left: 9px;
		background: #f0f2f4;
		font-weight: 600;
		line-height: 32px;
		white-space: nowrap;
	}

	.grid {
		display: grid;
		grid-template-columns: repeat(12, 1fr);
		grid-auto-rows: 31px;
		background: #fff;
	}

	.grid button {
		display: flex;
		align-items: center;
	}

	.grid .hover {
		border-radius: 3px;
		background: linear-gradient(#fff0a8, #ffe07c);
		box-shadow: inset 0 0 0 1px #e6c35c;
	}

	.grid path {
		stroke-width: 1.4;
	}

	.s {
		fill: url(#pale);
		stroke: #56646f;
	}

	.b {
		fill: #dbe8f7;
		stroke: #3d5c8c;
	}

	.c {
		stroke: #5f82b5;
	}

	.l {
		fill: none;
		stroke: #3f4a54;
	}

	.k {
		fill: #3f4a54;
	}

	.m {
		fill: #8a9aa9;
	}

	.d {
		fill: #eff3f7;
		stroke: #6d7780;
		stroke-dasharray: 1 1;
	}

	.num {
		font-size: 11px;
		font-weight: 700;
		fill: #1c2c44;
	}

	.letter {
		font-size: 11px;
		font-weight: 700;
		fill: #1c2c44;
	}

	.menu-scroll {
		display: flex;
		flex-direction: column;
		justify-content: space-between;
		width: 22px;
	}

	.menu-scroll button {
		display: flex;
		align-items: center;
		justify-content: center;
		height: 23px;
		border: 1px solid #b9bbc4;
		background: #f0f1f5;
	}

	.menu-scroll path {
		fill: #8d8fa0;
	}

	.menu-foot {
		display: flex;
		align-items: flex-end;
		justify-content: flex-end;
		height: 18px;
		padding-right: 4px;
		background: linear-gradient(#f7f8fb, #e4e6ee);
	}

	.tip {
		position: absolute;
		top: 75px;
		left: 58px;
		width: 44px;
		height: 33px;
		border: 1px solid #767680;
		border-radius: 3px;
		background: linear-gradient(#fff, #e4e5f0);
		color: #5b5b63;
		line-height: 34px;
		text-align: center;
	}

	/* workspace */
	.work {
		display: flex;
		height: 946px;
		background: linear-gradient(#ced0d6, #b9bbc4);
	}

	aside {
		width: 306px;
		padding-top: 4px;
		border-right: 1px solid #9a9da6;
	}

	.pane-tabs {
		display: flex;
		height: 30px;
		box-sizing: border-box;
		color: #66666e;
	}

	.pane-tabs button {
		width: 98px;
		border: 1px solid #9a9da6;
		border-left: 0;
		background: #bfc1c9;
		padding-bottom: 2px;
	}

	.pane-tabs .on {
		width: 95px;
		border: 0;
		background: #d6d8de;
	}

	.pane-tabs .close {
		flex: 1;
		display: flex;
		align-items: center;
		justify-content: flex-end;
		border-right: 0;
		padding: 0 8px 0 0;
	}

	.thumb {
		display: flex;
		box-sizing: border-box;
		width: 292px;
		height: 205px;
		margin: 5px 0 0 5px;
		padding: 5px 5px 7px 0;
		border: 1px solid #e2d68a;
		border-radius: 3px;
		background: linear-gradient(#fdf5c0, #fde27c 50%, #fffbd8 90%);
	}

	.thumb b {
		width: 29px;
		padding-top: 5px;
		box-sizing: border-box;
		padding-left: 10px;
		color: #5a4a1a;
	}

	.thumb-slide {
		display: flex;
		justify-content: flex-end;
		flex: 1;
		padding: 1px;
		border: 1px solid #7d7f88;
		background: #fff;
	}

	.thumb-slide i {
		width: 63px;
		border: 1px solid #385d8a;
		box-sizing: border-box;
		background: #4f81bd;
	}

	.editor {
		flex: 1;
		display: flex;
		flex-direction: column;
		border-left: 7px solid #eef0f4;
	}

	.stage {
		display: flex;
		height: 888px;
		border-left: 1px solid #9a9da6;
	}

	.canvas {
		flex: 1;
		padding-top: 26px;
		overflow: hidden;
	}

	.slide {
		position: relative;
		width: 68%;
		margin: 0 auto;
		aspect-ratio: 4 / 3;
		background: #fff;
		box-shadow: 3px 4px 6px rgba(0, 0, 0, 0.4);
	}

	.bluebox {
		position: absolute;
		inset: 0 -1px -1px auto;
		width: 25%;
		border: 2px solid #385d8a;
		background: #4f81bd;
	}

	.stem {
		position: absolute;
		left: 50%;
		top: -26px;
		width: 1px;
		height: 24px;
		background: #55606c;
	}

	.dot,
	.knob {
		position: absolute;
		box-sizing: border-box;
		width: 12px;
		height: 12px;
		margin: -6px;
		border: 1px solid #5f7f92;
		border-radius: 50%;
		background: #e4f6fa;
	}

	.knob {
		width: 10px;
		height: 10px;
		margin: -5px;
		border-radius: 0;
	}

	.nw,
	.ne,
	.top {
		top: -1px;
	}

	.sw,
	.se,
	.bottom {
		top: calc(100% + 1px);
	}

	.nw,
	.sw,
	.left {
		left: -1px;
	}

	.ne,
	.se,
	.right {
		left: calc(100% + 1px);
	}

	.top,
	.bottom {
		left: 50%;
	}

	.left,
	.right {
		top: 50%;
	}

	.holder {
		position: absolute;
		box-sizing: border-box;
		border: 2px dotted #7c7f85;
		font-family: Lato, Calibri, sans-serif;
		font-variant-ligatures: none;
		text-align: center;
	}

	/* the part of the outline that crosses the blue box is white */
	.holder::after {
		content: '';
		position: absolute;
		inset: -2px;
		border: 2px dotted #e8eef6;
	}

	.title {
		top: 31.2%;
		left: 7.2%;
		width: 85.6%;
		height: 21.6%;
		color: #111;
		font-size: 60px;
		line-height: 176px;
	}

	.title::after {
		clip-path: inset(0 0 0 79%);
	}

	.subtitle {
		top: 56.8%;
		left: 14.8%;
		width: 70.4%;
		height: 25.8%;
		color: #8b8b8b;
		font-size: 44px;
		line-height: 70px;
	}

	.subtitle::after {
		clip-path: inset(0 0 0 85%);
	}

	.scroll {
		display: flex;
		flex-direction: column;
		box-sizing: border-box;
		width: 23px;
		padding-bottom: 28px;
		background: #dcdfe6;
	}

	.scroll button {
		display: flex;
		align-items: center;
		justify-content: center;
		height: 32px;
	}

	.scroll path {
		fill: #55565c;
	}

	.scroll .jump {
		height: 24px;
	}

	.scroll .jump path {
		fill: #111;
	}

	.track {
		flex: 1;
		padding-top: 32px;
		display: flex;
	}

	.track i {
		flex: 1;
		margin: 0 2px;
		border: 1px solid #8f929c;
		background: linear-gradient(90deg, #fcfcfe, #dfe1e8);
	}

	.notes {
		position: relative;
		display: flex;
		flex: 1;
		border-top: 1px solid #8f929c;
		border-left: 1px solid #8f929c;
		background: #fff;
		box-shadow: 0 -8px 0 #f1f2f6, 0 -9px 0 #8f929c;
	}

	.notes p {
		flex: 1;
		padding: 10px 15px;
		color: #222;
		font-size: 23px;
		line-height: 28px;
	}

	.dim {
		justify-content: space-between;
		padding: 0;
	}

	.dim button {
		height: 26px;
	}

	.dim path {
		fill: #9a9ca5;
	}

	/* status bar */
	.status {
		display: flex;
		align-items: center;
		box-sizing: border-box;
		height: 35px;
		border-top: 1px solid #8f929c;
		background: linear-gradient(#e0e2e8, #c3c5cb);
	}

	.cell {
		display: flex;
		align-items: center;
		justify-content: center;
		height: 32px;
		box-sizing: border-box;
		border-right: 1px solid #9a9da6;
		white-space: nowrap;
	}

	.count {
		width: 114px;
	}

	.theme {
		width: 145px;
	}

	.spell {
		width: 53px;
	}

	.views {
		display: flex;
		align-items: center;
		gap: 8px;
		height: 34px;
		margin-left: auto;
		padding: 0 7px 0 5px;
		border-left: 1px solid #9a9da6;
	}

	.views .current {
		display: flex;
		align-items: center;
		justify-content: center;
		width: 28px;
		height: 29px;
		border: 1px solid #c79b32;
		border-radius: 3px;
		background: #ffdf70;
		margin-right: -4px;
	}

	.views label {
		margin: 0 3px 0 12px;
	}

	.views input {
		appearance: none;
		width: 154px;
		height: 24px;
		margin: 0 -8px;
		background: linear-gradient(#8b8e96, #8b8e96) center / 100% 1px no-repeat;
	}

	.views input::-webkit-slider-thumb {
		appearance: none;
		width: 14px;
		height: 19px;
		border: 2px solid #6c6e76;
		border-radius: 2px 2px 7px 7px;
		background: #f8f8fa;
	}

	.views .fit {
		margin-left: 2px;
	}

	/* taskbar */
	.taskbar {
		display: flex;
		align-items: center;
		gap: 6px;
		box-sizing: border-box;
		height: 40px;
		padding: 4px 3px 0;
		border-top: 2px solid #f2f0ea;
		background: #d6d2c9;
		color: #111;
	}

	.taskbar button:not(.more) {
		display: flex;
		align-items: center;
		gap: 5px;
		box-sizing: border-box;
		height: 32px;
		border: 2px solid;
		border-color: #fff #55534e #55534e #fff;
		white-space: nowrap;
	}

	.start {
		width: 80px;
		font-weight: 700;
	}

	.grip {
		width: 3px;
		height: 26px;
		margin: 0 2px 0 4px;
		border: 1px solid;
		border-color: #fff #8c8980 #8c8980 #fff;
		box-sizing: border-box;
	}

	.task {
		flex: 0 1 245px;
		min-width: 0;
		padding: 0 5px;
	}

	.taskbar .active:not(.more) {
		border-color: #55534e #fff #fff #55534e;
		background: #ebe9e4;
		font-weight: 700;
	}

	.tray {
		display: flex;
		align-items: center;
		gap: 2px;
		box-sizing: border-box;
		height: 32px;
		margin-left: auto;
		padding: 0 16px 0 6px;
		border: 1px solid;
		border-color: #84817a #fff #fff #84817a;
		white-space: nowrap;
	}

	.more {
		width: 14px;
		font-size: 20px;
		font-weight: 700;
	}

	time {
		margin-left: 12px;
	}

	/* pen marks over the window */
	.marks {
		position: absolute;
		z-index: 9;
		inset: 0;
		width: 100%;
		height: 100%;
		pointer-events: none;
		font-family: Lato, Calibri, sans-serif;
		font-size: 48px;
		font-weight: 700;
	}

	.wide {
		font-size: 50px;
	}
</style>
